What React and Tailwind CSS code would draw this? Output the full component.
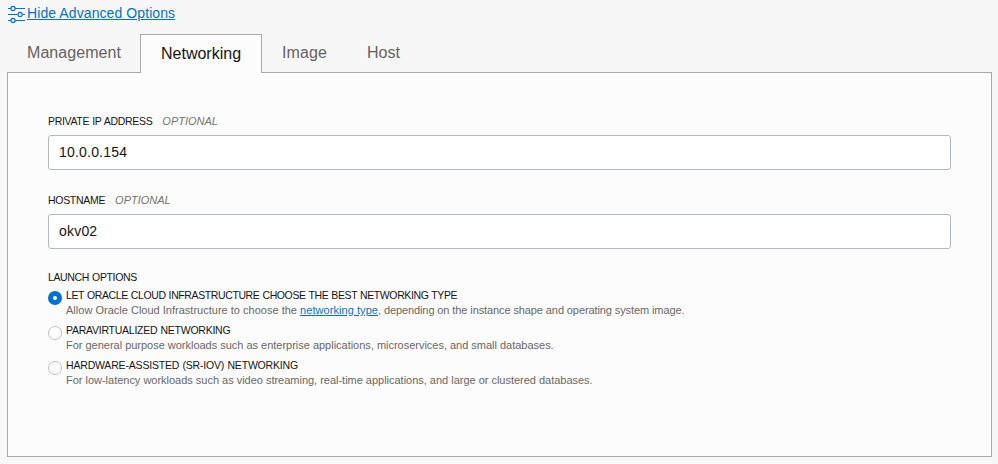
const inactiveTab = "flex h-[37px] items-center text-base text-[#66625f]";

function SlidersIcon() {
  return (
    <svg width="19" height="19" viewBox="0 0 19 19" fill="none" stroke="#0572ce" strokeWidth="1.2" className="shrink-0">
      <path d="M1 3.5h2.8M8.2 3.5H18M1 9.5h9.3M15.9 9.5H18M1 15.5h2.8M8.2 15.5H18" />
      <circle cx="6" cy="3.5" r="2.1" />
      <circle cx="13.1" cy="9.5" r="2.1" />
      <circle cx="6" cy="15.5" r="2.1" />
    </svg>
  );
}

function Field({ label, value, tracking }) {
  return (
    <div className="h-[79px]">
      <div className="flex h-[14px] items-center gap-[10px] text-[11px] leading-[14px] whitespace-nowrap">
        <span className={`text-[10.5px] [word-spacing:0.5px] text-[#161513] ${tracking}`}>{label}</span>
        <span className="text-[#77736f] italic">OPTIONAL</span>
      </div>
      <div className="mt-[7px] flex h-[35px] w-[903px] items-center rounded-[3px] border border-[#b3b9c1] bg-white px-[10px] text-[14px] tracking-[0.2px] text-[#161513]">
        {value}
      </div>
    </div>
  );
}

function Option({ title, tracking, selected, children }) {
  return (
    <div className="flex h-[35px] gap-1 whitespace-nowrap">
      {selected ? (
        <span className="mt-[3px] flex size-[14px] shrink-0 items-center justify-center rounded-full bg-[#0572ce]">
          <span className="size-1 rounded-full bg-white" />
        </span>
      ) : (
        <span className="mt-[3px] size-[14px] shrink-0 rounded-full border border-[#bfc1c5] bg-white" />
      )}
      <div className="text-[11px] leading-[15px]">
        <div className={`text-[10.5px] [word-spacing:0.5px] text-[#161513] ${tracking}`}>{title}</div>
        <div className="tracking-[-0.015px] text-[#6b6764]">{children}</div>
      </div>
    </div>
  );
}

export default function App() {
  return (
    <div className="h-[464px] w-[998px] overflow-hidden bg-[#f7f7f7] px-[7px] font-['Liberation_Sans',Arial,sans-serif]">
      <div className="flex h-[34px] pt-1">
        <div className="pt-px">
          <SlidersIcon />
        </div>
        <a className="ml-px h-4 text-[14px] leading-[18px] tracking-[0.09px] text-[#0572ce] underline">Hide Advanced Options</a>
      </div>
      <div className="flex h-[38px]">
        <div className={`${inactiveTab} w-[133px] pl-5 tracking-[0.06px]`}>Management</div>
        <div className="z-10 flex h-[39px] w-[122px] items-center border border-b-0 border-[#a9a9a9] bg-[#fcfcfc] pl-5 text-base text-[#161513]">
          Networking
        </div>
        <div className={`${inactiveTab} w-[105px] pl-5 tracking-[0.1px]`}>Image</div>
        <div className={inactiveTab}>Host</div>
      </div>
      <div className="h-[385px] w-[985px] border border-[#a9a9a9] bg-[#fcfcfc] pt-[41px] pl-10">
        <Field label="PRIVATE IP ADDRESS" value="10.0.0.154" tracking="tracking-[-0.32px]" />
        <Field label="HOSTNAME" value="okv02" tracking="tracking-[-0.3px]" />
        <div className="h-[16px] text-[10.5px] leading-[11px] tracking-[-0.36px] [word-spacing:0.5px] text-[#161513]">
          LAUNCH OPTIONS
        </div>
        <Option
          title="LET ORACLE CLOUD INFRASTRUCTURE CHOOSE THE BEST NETWORKING TYPE"
          tracking="tracking-[-0.39px]"
          selected
        >
          <span className="tracking-[0.01px]">Allow Oracle Cloud Infrastructure to choose the </span>
          <a className="tracking-[0.06px] text-[#0572ce] underline">networking type</a>
          <span className="tracking-[-0.1px]">, depending on the instance shape and operating system image.</span>
        </Option>
        <Option title="PARAVIRTUALIZED NETWORKING" tracking="tracking-[-0.25px]">
          For general purpose workloads such as enterprise applications, microservices, and small databases.
        </Option>
        <Option title="HARDWARE-ASSISTED (SR-IOV) NETWORKING" tracking="tracking-[-0.18px]">
          For low-latency workloads such as video streaming, real-time applications, and large or clustered databases.
        </Option>
      </div>
    </div>
  );
}
